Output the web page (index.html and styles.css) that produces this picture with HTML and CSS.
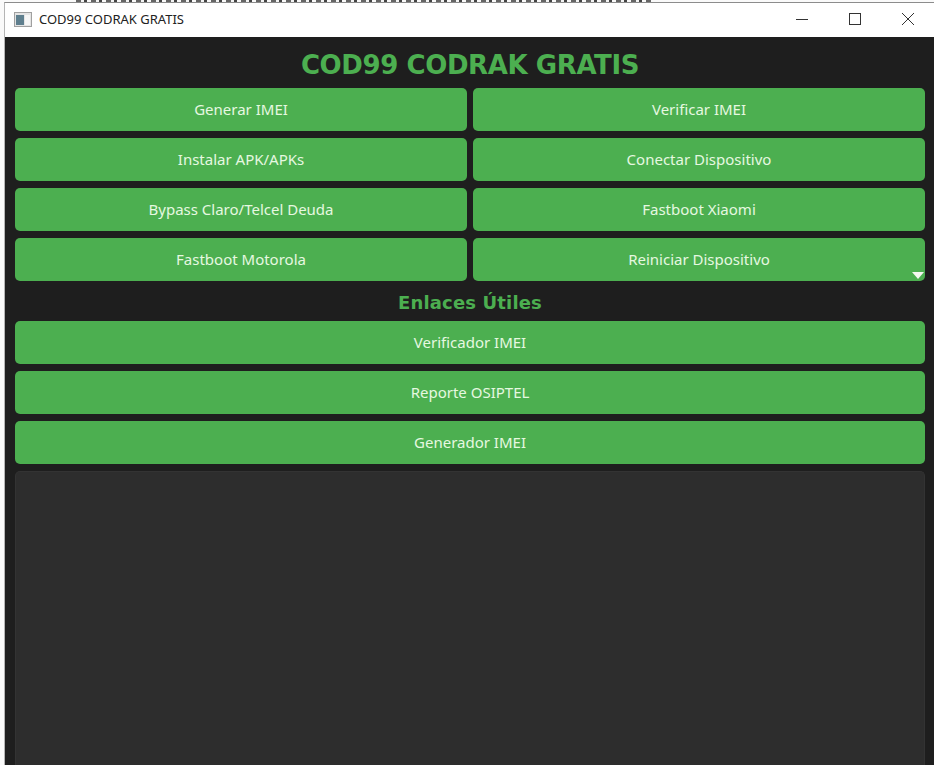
FILE: index.html
```html
<!DOCTYPE html>
<html lang="es">
<head>
    <meta charset="UTF-8">
    <title>COD99 CODRAK GRATIS</title>
    <link rel="stylesheet" href="styles.css">
</head>
<body>

    <!-- Sliver of the page behind the window -->
    <div class="behind"></div>

    <div class="window">
        <!-- Title bar -->
        <div class="titlebar">
            <svg class="app-icon" width="18" height="15" viewBox="0 0 18 15">
                <rect x="0.5" y="0.5" width="17" height="14" fill="#e4e4e4" stroke="#a0a0a0"/>
                <rect x="2" y="3" width="8" height="10" fill="#5f7f8e"/>
                <rect x="11" y="3" width="5" height="10" fill="#f6f6f6"/>
            </svg>
            <span class="window-title">COD99 CODRAK GRATIS</span>
            <div class="window-controls">
                <svg width="12" height="12" viewBox="0 0 12 12"><path d="M0 6.5H12" stroke="#333" stroke-width="1"/></svg>
                <svg width="12" height="12" viewBox="0 0 12 12"><rect x="0.5" y="0.5" width="11" height="11" fill="none" stroke="#333"/></svg>
                <svg width="12" height="12" viewBox="0 0 12 12"><path d="M0 0L12 12M12 0L0 12" stroke="#333" stroke-width="1"/></svg>
            </div>
        </div>

        <div class="content">
            <h1>COD99 CODRAK GRATIS</h1>

            <div class="button-grid">
                <button>Generar IMEI</button>
                <button>Verificar IMEI</button>
                <button>Instalar APK/APKs</button>
                <button>Conectar Dispositivo</button>
                <button>Bypass Claro/Telcel Deuda</button>
                <button>Fastboot Xiaomi</button>
                <button>Fastboot Motorola</button>
                <button class="has-arrow">Reiniciar Dispositivo</button>
            </div>

            <h2>Enlaces Útiles</h2>

            <div class="button-list">
                <button>Verificador IMEI</button>
                <button>Reporte OSIPTEL</button>
                <button>Generador IMEI</button>
            </div>

            <div class="output"></div>
        </div>
    </div>

</body>
</html>
```

FILE: styles.css
```css
* {
    margin: 0;
    padding: 0;
    box-sizing: border-box;
}

html, body {
    height: 765px;
    overflow: hidden;
}

body {
    font-family: "Noto Sans", "Open Sans", sans-serif;
    background-color: #fafafa;
    padding-left: 4px;
    display: flex;
    flex-direction: column;
}

.behind {
    height: 2px;
    flex-shrink: 0;
    width: 575px;
    margin-left: 72px;
    background: repeating-linear-gradient(90deg, #666 0 5px, #f4f4f4 5px 8px, #444 8px 11px, #fafafa 11px 15px);
}

.window {
    flex: 1;
    min-height: 0;
    display: flex;
    flex-direction: column;
    border-top: 1px solid #8c8c8c;
    border-left: 1px solid #b5b5b5;
}

.titlebar {
    height: 34px;
    flex-shrink: 0;
    background-color: #ffffff;
    display: flex;
    align-items: center;
    padding: 0 0 2px 9px;
}

.app-icon {
    margin-right: 7px;
}

.window-title {
    font-size: 13px;
    color: #222222;
}

.window-controls {
    margin-left: auto;
    display: flex;
    gap: 41px;
    padding-right: 20px;
}

.content {
    flex: 1;
    background-color: #1e1e1e;
    padding: 0 9px 0 10px;
    display: flex;
    flex-direction: column;
}

h1 {
    height: 51px;
    line-height: 57px;
    text-align: center;
    font-family: "DejaVu Sans", sans-serif;
    font-size: 26px;
    font-weight: 700;
    letter-spacing: -0.4px;
    color: #4caf50;
}

h2 {
    height: 40px;
    line-height: 43px;
    text-align: center;
    font-family: "DejaVu Sans", sans-serif;
    font-size: 18px;
    font-weight: 700;
    letter-spacing: 0.15px;
    color: #4caf50;
}

.button-grid {
    display: grid;
    grid-template-columns: 1fr 1fr;
    gap: 7px 6px;
}

.button-list {
    display: flex;
    flex-direction: column;
    gap: 7px;
}

button {
    height: 43px;
    padding-bottom: 2px;
    background-color: #4caf50;
    color: #e6f8e0;
    border: none;
    border-radius: 5px;
    font-family: inherit;
    font-size: 15px;
}

.has-arrow {
    position: relative;
}

/* little white combo arrow in the corner */
.has-arrow::after {
    content: "";
    position: absolute;
    right: 1px;
    bottom: 2px;
    border-left: 6px solid transparent;
    border-right: 6px solid transparent;
    border-top: 7px solid #f4f8f0;
}

.output {
    flex: 1;
    margin-top: 7px;
    background-color: #2d2d2d;
    border: 1px solid #333333;
    border-bottom: none;
    border-radius: 5px 5px 0 0;
}
```
